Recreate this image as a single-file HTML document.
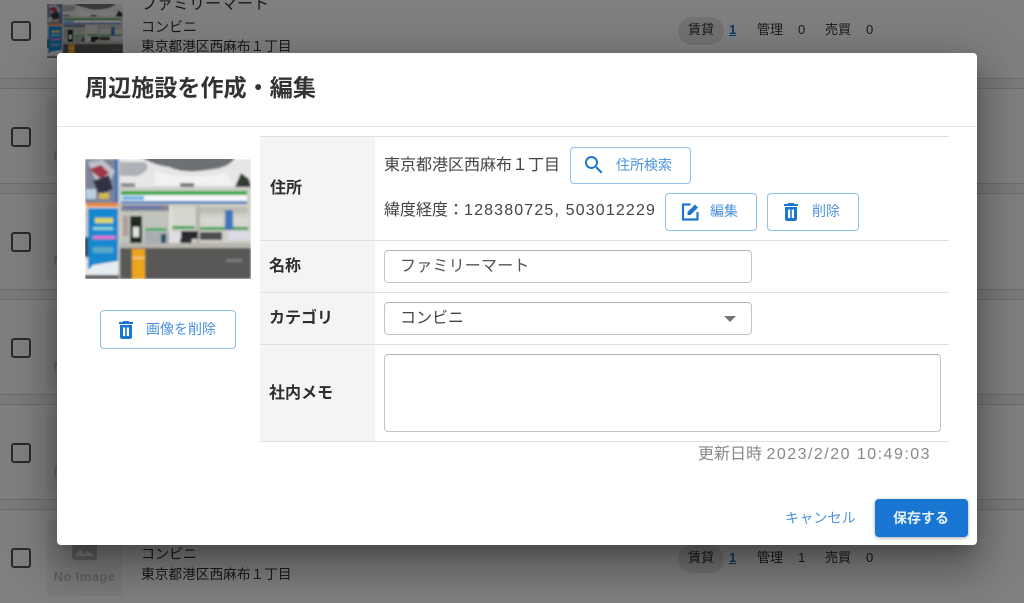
<!DOCTYPE html>
<html lang="ja"><head><meta charset="utf-8">
<style>
*{box-sizing:border-box}
html,body{margin:0;padding:0;width:1024px;height:603px;overflow:hidden;background:#808080}
#w{position:absolute;left:0;top:0;width:1024px;height:603px;overflow:hidden;background:#fff;filter:blur(.3px);font-family:"Liberation Sans","Noto Sans CJK JP",sans-serif;color:#333}
.a{position:absolute}
.t{position:absolute;white-space:nowrap;line-height:20px;height:20px}
.gap{position:absolute;left:0;width:1024px;height:11px;background:#f5f5f5;border-top:1px solid #d8d8d8;border-bottom:1px solid #d8d8d8}
.cb{position:absolute;left:11px;width:20px;height:20px;border:2.5px solid #555;border-radius:3px}
.noimg{position:absolute;left:47px;width:75px;height:76px;background:#f5f5f5}
.noimg b{position:absolute;left:0;right:0;top:49px;text-align:center;font-size:13px;line-height:16px;color:#c0c0c0;letter-spacing:.4px}
.noimg svg{position:absolute;left:21px;top:14px}
.bg13{font-size:14px}
.s{font-size:13px;color:#333}
.pill{position:absolute;left:678px;width:46px;height:28px;border-radius:14px;background:#e4e4e4}
#ov{position:absolute;left:0;top:0;width:1024px;height:603px;background:rgba(0,0,0,.5)}
#dlg{position:absolute;left:57px;top:53px;width:920px;height:492px;background:#fff;border-radius:4px;box-shadow:0 11px 15px -7px rgba(0,0,0,.2),0 24px 38px 3px rgba(0,0,0,.2),0 9px 46px 8px rgba(0,0,0,.18)}
.ln{position:absolute;left:260px;width:689px;height:1px;background:#e0e0e0;z-index:3}
.lab{position:absolute;left:260px;width:115px;background:#f4f4f4}
.b{font-weight:bold;font-size:16px;color:#2e2e2e}
.btn{position:absolute;border:1px solid #90c0ec;border-radius:4px;background:#fff}
.bt{font-size:14px;color:#4a93dc}
.fld{position:absolute;left:384px;border:1px solid #c4c4c4;border-top-color:#b0b0b0;border-radius:4px;background:#fff}
.v{font-size:16px;color:#444}
</style></head>
<body>
<div id="w">
<svg width="0" height="0" style="position:absolute">
<defs>
<filter id="bl" x="0" y="0" width="100%" height="100%"><feGaussianBlur stdDeviation="1"/></filter>
<symbol id="shop" viewBox="0 0 166 120" preserveAspectRatio="none">
<g filter="url(#bl)">
<rect width="166" height="120" fill="#e6e6e6"/>
<path d="M56 -2H150Q146 9 122 11Q100 15 84 8Q68 6 56 -2Z" fill="#6d6f74"/>
<path d="M34 3H60Q68 11 52 17H34Z" fill="#aeb1b7"/>
<path d="M70 12Q100 22 140 14L150 26H70Z" fill="#f2f2f2"/>
<path d="M150 28L156 14L164 20L166 28Z" fill="#333e33"/>
<rect x="36" y="24" width="14" height="4" fill="#8a8a88"/><rect x="95" y="24" width="14" height="4" fill="#77797a"/>
<rect x="34" y="28" width="132" height="60" fill="#cfcec6"/>
<rect x="36" y="32" width="126" height="4" fill="#36a844"/>
<rect x="36" y="36" width="126" height="6" fill="#f4f6f8"/>
<rect x="37" y="37" width="22" height="4" fill="#6db3e3"/>
<rect x="36" y="42" width="126" height="3" fill="#4e83bf"/>
<rect x="36" y="46" width="48" height="6" fill="#84838c"/>
<rect x="40" y="47" width="36" height="3" fill="#6676ae"/>
<rect x="36" y="52" width="48" height="36" fill="#bfc3bc"/>
<rect x="45" y="57" width="12" height="29" fill="#232524"/>
<rect x="48" y="68" width="6" height="10" fill="#dce3dd"/>
<rect x="38" y="57" width="5" height="20" fill="#b09a9a"/>
<rect x="87" y="49" width="23" height="18" fill="#d6d8d0"/>
<rect x="115" y="48" width="48" height="6" fill="#bcbeb6"/>
<rect x="115" y="58" width="23" height="9" fill="#d5d8d0"/><rect x="146" y="58" width="19" height="9" fill="#d5d8d0"/>
<rect x="84" y="47" width="3" height="40" fill="#e0dfd8"/><rect x="111" y="47" width="4" height="40" fill="#b5b4ad"/>
<rect x="60" y="69" width="22" height="3" fill="#48a860"/><rect x="87" y="67" width="23" height="3" fill="#3ca352"/><rect x="115" y="68" width="48" height="3" fill="#3ca352"/>
<rect x="60" y="73" width="24" height="14" fill="#a6aeb4"/><rect x="76" y="75" width="5" height="12" fill="#1a5062"/>
<rect x="84" y="73" width="14" height="12" fill="#e2dde0"/>
<rect x="115" y="73" width="22" height="8" fill="#4c4d51"/>
<rect x="96" y="72" width="17" height="8" fill="#26252b"/><ellipse cx="101" cy="82" rx="6" ry="5" fill="#2b2b32"/>
<rect x="143" y="72" width="22" height="9" fill="#dcdce8"/>
<rect x="140" y="51" width="8" height="20" fill="#3c76b8"/>
<rect x="34" y="84" width="132" height="5" fill="#b6b5ad"/>
<rect x="34" y="89" width="132" height="31" fill="#5a5957"/>
<rect x="141" y="100" width="16" height="3" fill="#7a7a78"/>
<rect x="47" y="90" width="13" height="30" fill="#eca41c"/><rect x="47" y="98" width="13" height="2" fill="#f2c772"/>
<rect x="0" y="0" width="31" height="44" fill="#7d8498"/>
<path d="M3 3L18 1L30 12L24 24L10 20Z" fill="#bfc1cc"/>
<path d="M4 10L16 6L24 14L16 20Z" fill="#a23644"/>
<path d="M8 22L24 16L28 30L14 36Z" fill="#303346"/>
<rect x="1" y="30" width="10" height="10" fill="#bccde0"/>
<rect x="14" y="34" width="10" height="6" fill="#d2b854"/>
<rect x="30" y="0" width="4" height="44" fill="#1f6fc2"/>
<rect x="1" y="44" width="33" height="4" fill="#ee8a2f"/>
<rect x="0" y="49" width="3" height="50" fill="#c9c7c6"/><rect x="0" y="78" width="3" height="20" fill="#333"/>
<path d="M3 49H33V104L3 110Z" fill="#1788cf"/>
<rect x="10" y="59" width="18" height="5" fill="#dcd75e"/><rect x="8" y="68" width="20" height="3" fill="#8fd0d8"/>
<rect x="8" y="77" width="22" height="3" fill="#e66fcb"/><rect x="8" y="88" width="20" height="6" fill="#5aa8c8"/>
<path d="M1 114L8 106L33 102V116L14 118Z" fill="#e6edf1"/>
<rect x="33" y="0" width="2" height="120" fill="#c4c4c4"/>
<rect x="0" y="116" width="34" height="4" fill="#5a5957"/>
</g>
</symbol>
<symbol id="pic" viewBox="0 0 24 24"><path d="M21 17V5a2 2 0 0 0-2-2H5a2 2 0 0 0-2 2v12a2 2 0 0 0 2 2h14a2 2 0 0 0 2-2zM5 16l4-5 3 3.500 2.500-2.500L19 16z" fill="#c0c0c0" fill-rule="evenodd"/></symbol>
<symbol id="del" viewBox="0 0 24 24"><path fill="#1976d2" d="M6 19c0 1.100.9 2 2 2h8c1.100 0 2-.9 2-2V7H6v12zM19 4h-3.500l-1-1h-5l-1 1H5v2h14V4z"/><rect x="9" y="9.500" width="2.200" height="8.500" fill="#fff"/><rect x="12.800" y="9.500" width="2.200" height="8.500" fill="#fff"/></symbol>
</defs>
</svg>

<!-- background list -->
<div class="gap" style="top:78px"></div>
<div class="gap" style="top:183px"></div>
<div class="gap" style="top:289px"></div>
<div class="gap" style="top:394px"></div>
<div class="gap" style="top:499px"></div>
<div class="cb" style="top:21px"></div>
<div class="cb" style="top:127px"></div>
<div class="cb" style="top:232px"></div>
<div class="cb" style="top:338px"></div>
<div class="cb" style="top:443px"></div>
<div class="cb" style="top:548px"></div>
<svg class="a" style="left:47px;top:4px" width="76" height="54"><use href="#shop" width="76" height="54"/></svg>
<div class="noimg" style="top:99px"><svg width="33" height="33"><use href="#pic" width="33" height="33"/></svg><b>No Image</b></div>
<div class="noimg" style="top:204px"><svg width="33" height="33"><use href="#pic" width="33" height="33"/></svg><b>No Image</b></div>
<div class="noimg" style="top:310px"><svg width="33" height="33"><use href="#pic" width="33" height="33"/></svg><b>No Image</b></div>
<div class="noimg" style="top:415px"><svg width="33" height="33"><use href="#pic" width="33" height="33"/></svg><b>No Image</b></div>
<div class="noimg" style="top:520px"><svg width="33" height="33"><use href="#pic" width="33" height="33"/></svg><b>No Image</b></div>

<div class="t" style="left:141px;top:-5px;font-size:16px">ファミリーマート</div>
<div class="t bg13" style="left:141px;top:17px">コンビニ</div>
<div class="t bg13" style="left:141px;top:37px;font-size:13.700px">東京都港区西麻布１丁目</div>
<div class="t bg13" style="left:141px;top:544px">コンビニ</div>
<div class="t bg13" style="left:141px;top:565px;font-size:13.700px">東京都港区西麻布１丁目</div>

<div class="pill" style="top:17px"></div>
<div class="t s" style="left:688px;top:20px">賃貸</div>
<div class="t s" style="left:729px;top:20px;color:#1976d2;font-weight:bold;text-decoration:underline">1</div>
<div class="t s" style="left:757px;top:20px">管理</div><div class="t s" style="left:798px;top:20px">0</div>
<div class="t s" style="left:825px;top:20px">売買</div><div class="t s" style="left:866px;top:20px">0</div>
<div class="pill" style="top:545px"></div>
<div class="t s" style="left:688px;top:548px">賃貸</div>
<div class="t s" style="left:729px;top:548px;color:#1976d2;font-weight:bold;text-decoration:underline">1</div>
<div class="t s" style="left:757px;top:548px">管理</div><div class="t s" style="left:798px;top:548px">1</div>
<div class="t s" style="left:825px;top:548px">売買</div><div class="t s" style="left:866px;top:548px">0</div>

<div id="ov"></div>
<div id="dlg"></div>

<!-- dialog content (page coords) -->
<div class="t" style="left:85px;top:78px;font-size:23.100px;line-height:20px;font-weight:bold;color:#333">周辺施設を作成・編集</div>
<div class="a" style="left:57px;top:126px;width:920px;height:1px;background:#e4e4e4"></div>

<svg class="a" style="left:85px;top:159px" width="166" height="120"><use href="#shop" width="166" height="120"/></svg>
<div class="btn" style="left:100px;top:310px;width:136px;height:39px"></div>
<svg class="a" style="left:114px;top:318px" width="24" height="24"><use href="#del" width="24" height="24"/></svg>
<div class="t bt" style="left:146px;top:319px">画像を削除</div>

<div class="lab" style="top:136px;height:305px"></div>
<div class="ln" style="top:136px"></div>
<div class="ln" style="top:240px"></div>
<div class="ln" style="top:292px"></div>
<div class="ln" style="top:344px"></div>
<div class="ln" style="top:441px"></div>
<div class="t b" style="left:270px;top:179px">住所</div>
<div class="t b" style="left:269px;top:257px">名称</div>
<div class="t b" style="left:269px;top:309px">カテゴリ</div>
<div class="t b" style="left:269px;top:384px">社内メモ</div>

<div class="t v" style="left:384px;top:156px">東京都港区西麻布１丁目</div>
<div class="btn" style="left:570px;top:147px;width:121px;height:37px"></div>
<svg class="a" style="left:582px;top:153px" width="24" height="24" viewBox="0 0 24 24"><path fill="#1976d2" d="M15.500 14h-.79l-.28-.27A6.470 6.470 0 0 0 16 9.500 6.500 6.500 0 1 0 9.500 16c1.610 0 3.090-.59 4.230-1.570l.27.28v.79l5 4.990L20.490 19l-4.990-5zm-6 0C7.010 14 5 11.990 5 9.500S7.010 5 9.500 5 14 7.010 14 9.500 11.990 14 9.500 14z"/></svg>
<div class="t bt" style="left:616px;top:155px">住所検索</div>

<div class="t v" style="left:384px;top:201px">緯度経度：<span style="letter-spacing:1.150px">128380725, 503012229</span></div>
<div class="btn" style="left:665px;top:193px;width:92px;height:38px"></div>
<svg class="a" style="left:678px;top:200px" width="24" height="24" viewBox="0 0 24 24"><path fill="none" stroke="#1976d2" stroke-width="2.200" stroke-linejoin="round" d="M12.500 4.500H5v15h14.500V12"/><path fill="#1976d2" d="M9.500 15v-3L17 4.500 20 7.500 12.500 15z"/></svg>
<div class="t bt" style="left:710px;top:201px">編集</div>
<div class="btn" style="left:767px;top:193px;width:92px;height:38px"></div>
<svg class="a" style="left:779px;top:200px" width="24" height="24"><use href="#del" width="24" height="24"/></svg>
<div class="t bt" style="left:812px;top:201px">削除</div>

<div class="fld" style="top:250px;width:368px;height:33px"></div>
<div class="t v" style="left:400px;top:257px;letter-spacing:.2px;color:#555">ファミリーマート</div>
<div class="fld" style="top:302px;width:368px;height:33px"></div>
<div class="t v" style="left:400px;top:309px;color:#444">コンビニ</div>
<div class="a" style="left:724px;top:316px;width:0;height:0;border-left:6px solid transparent;border-right:6px solid transparent;border-top:6px solid #757575"></div>
<div class="fld" style="top:354px;width:557px;height:78px"></div>

<div class="t" style="left:698px;top:445px;font-size:16px;color:#888">更新日時 <span style="letter-spacing:1.480px">2023/2/20 10:49:03</span></div>
<div class="t" style="left:785px;top:508px;font-size:14px;letter-spacing:.2px;color:#4a93dc">キャンセル</div>
<div class="a" style="left:875px;top:499px;width:93px;height:38px;border-radius:4px;background:#1976d2;box-shadow:0 1px 3px rgba(0,0,0,.35)"></div>
<div class="t" style="left:893px;top:508px;font-size:14px;font-weight:bold;color:#e6f0fa">保存する</div>
</div>
</body></html>
